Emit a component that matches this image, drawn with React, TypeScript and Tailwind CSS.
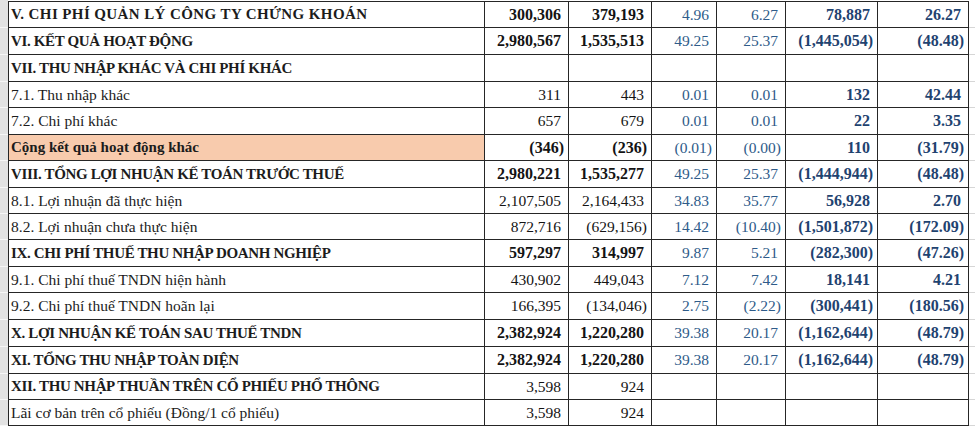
import React from "react";

type Row = {
  label: string;
  head?: boolean;
  orange?: boolean;
  boldNums?: boolean;
  track?: string;
  v: string[];
  h: 26 | 27;
};

const rows: Row[] = [
  { label: "V. CHI PHÍ QUẢN LÝ CÔNG TY CHỨNG KHOÁN", head: true, boldNums: true, track: "tracking-[0.4px]", v: ["300,306", "379,193", "4.96", "6.27", "78,887", "26.27"], h: 27 },
  { label: "VI. KẾT QUẢ HOẠT ĐỘNG", head: true, boldNums: true, v: ["2,980,567", "1,535,513", "49.25", "25.37", "(1,445,054)", "(48.48)"], h: 27 },
  { label: "VII. THU NHẬP KHÁC VÀ CHI PHÍ KHÁC", head: true, v: ["", "", "", "", "", ""], h: 27 },
  { label: "7.1. Thu nhập khác", v: ["311", "443", "0.01", "0.01", "132", "42.44"], h: 26 },
  { label: "7.2. Chi phí khác", v: ["657", "679", "0.01", "0.01", "22", "3.35"], h: 27 },
  { label: "Cộng kết quả hoạt động khác", head: true, orange: true, boldNums: true, track: "tracking-normal", v: ["(346)", "(236)", "(0.01)", "(0.00)", "110", "(31.79)"], h: 26 },
  { label: "VIII. TỔNG LỢI NHUẬN KẾ TOÁN TRƯỚC THUẾ", head: true, boldNums: true, v: ["2,980,221", "1,535,277", "49.25", "25.37", "(1,444,944)", "(48.48)"], h: 27 },
  { label: "8.1. Lợi nhuận đã thực hiện", v: ["2,107,505", "2,164,433", "34.83", "35.77", "56,928", "2.70"], h: 26 },
  { label: "8.2. Lợi nhuận chưa thực hiện", v: ["872,716", "(629,156)", "14.42", "(10.40)", "(1,501,872)", "(172.09)"], h: 26 },
  { label: "IX. CHI PHÍ THUẾ THU NHẬP DOANH NGHIỆP", head: true, boldNums: true, v: ["597,297", "314,997", "9.87", "5.21", "(282,300)", "(47.26)"], h: 27 },
  { label: "9.1. Chi phí thuế TNDN hiện hành", v: ["430,902", "449,043", "7.12", "7.42", "18,141", "4.21"], h: 26 },
  { label: "9.2. Chi phí thuế TNDN hoãn lại", v: ["166,395", "(134,046)", "2.75", "(2.22)", "(300,441)", "(180.56)"], h: 27 },
  { label: "X. LỢI NHUẬN KẾ TOÁN SAU THUẾ TNDN", head: true, boldNums: true, v: ["2,382,924", "1,220,280", "39.38", "20.17", "(1,162,644)", "(48.79)"], h: 27 },
  { label: "XI. TỔNG THU NHẬP TOÀN DIỆN", head: true, boldNums: true, v: ["2,382,924", "1,220,280", "39.38", "20.17", "(1,162,644)", "(48.79)"], h: 27 },
  { label: "XII. THU NHẬP THUẦN TRÊN CỔ PHIẾU PHỔ THÔNG", head: true, v: ["3,598", "924", "", "", "", ""], h: 26 },
  { label: "Lãi cơ bản trên cổ phiếu (Đồng/1 cổ phiếu)", v: ["3,598", "924", "", "", "", ""], h: 26 },
];

const widths = ["w-[84px]", "w-[83px]", "w-[65px]", "w-[69px]", "w-[92px]", "w-[91px]"];

// cols 0-1 black (bold on section rows), 2-3 light blue normal, 4-5 dark blue bold
function NumCell({ value, col, bold }: { value: string; col: number; bold?: boolean }) {
  const neg = value.startsWith("(");
  let style = bold ? "font-bold text-[16px] text-[#141414]" : "font-normal text-[15.5px] text-[#141414]";
  if (col === 2 || col === 3) style = "font-normal text-[15.5px] text-[#2e5b89]";
  if (col >= 4) style = "font-bold text-[16px] text-[#1f4370]";
  return (
    <div
      className={`${widths[col]} shrink-0 h-full border-r border-[#262626] flex items-center justify-end ${neg ? "pr-[4px]" : "pr-[7px]"} ${style}`}
    >
      {value}
    </div>
  );
}

export default function App() {
  return (
    <div
      className="w-[975px] h-[432px] overflow-hidden bg-white leading-none"
      style={{ fontFamily: '"Liberation Serif", "Times New Roman", serif' }}
    >
      <div className="flex h-[1px]">
        <div className="w-[8px] bg-[#e3e3e3]" />
        <div className="flex-1" />
      </div>
      {rows.map((r, i) => (
        <div key={i} className={`flex ${r.h === 27 ? "h-[27px]" : "h-[26px]"}`}>
          <div className="w-[8px] shrink-0 bg-[#e3e3e3] border-b border-[#f7f7f7]" />
          <div className={`flex ${i === 0 ? "border-t" : ""} border-b border-[#262626]`}>
            <div
              className={`w-[477px] shrink-0 h-full border-l border-r border-[#262626] flex items-center pl-[2px] text-[#1c1c1c] ${
                r.head ? `font-bold text-[15px] ${r.track ?? "tracking-[-0.35px]"}` : "font-normal text-[15.5px]"
              } ${r.orange ? "bg-[#f8cbad]" : ""}`}
            >
              {r.label}
            </div>
            {r.v.map((val, c) => (
              <NumCell key={c} value={val} col={c} bold={r.boldNums} />
            ))}
          </div>
          <div className="flex-1 border-b border-dashed border-[#d6d6d6]" />
        </div>
      ))}
    </div>
  );
}
